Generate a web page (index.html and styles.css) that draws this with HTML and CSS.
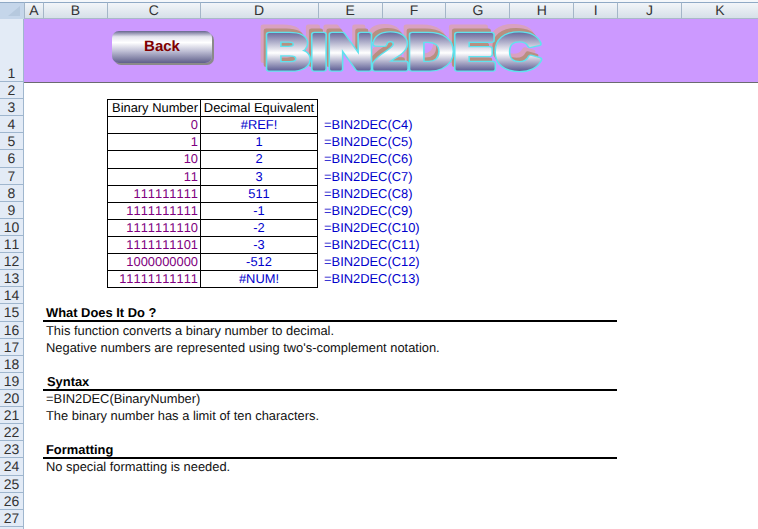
FILE: index.html
```html
<!DOCTYPE html>
<html lang="en">
<head>
    <meta charset="UTF-8">
    <title>BIN2DEC</title>
    <link rel="stylesheet" href="styles.css">
</head>
<body>
    <div class="colheads">
        <div class="corner"><svg width="24" height="16" viewBox="0 0 24 16"><polygon points="20,3 20,13 8,13" fill="#b6c9de"/></svg></div>
        <div class="col a">A</div>
        <div class="col b">B</div>
        <div class="col c">C</div>
        <div class="col d">D</div>
        <div class="col e">E</div>
        <div class="col e">F</div>
        <div class="col e">G</div>
        <div class="col e">H</div>
        <div class="col i">I</div>
        <div class="col e">J</div>
        <div class="col k">K</div>
    </div>

    <div class="row banner-row">
        <div class="num">1</div>
        <div class="banner">
            <a href="#" class="back">Back</a>
            <svg class="wordart" width="320" height="62" viewBox="0 0 320 62">
                <defs>
                    <linearGradient id="metal" gradientUnits="userSpaceOnUse" x1="0" y1="13" x2="0" y2="51">
                        <stop offset="0" stop-color="#66669a"/>
                        <stop offset="0.55" stop-color="#ffffff"/>
                        <stop offset="1" stop-color="#66669a"/>
                    </linearGradient>
                    <text id="word" transform="scale(1.255 1)" y="50">BIN2DEC</text>
                </defs>
                <use href="#word" class="pink" x="5" y="-8"/>
                <use href="#word" class="brown" x="8" y="-4"/>
                <use href="#word" class="outline" x="11"/>
                <use href="#word" class="metal" x="11"/>
            </svg>
        </div>
    </div>

    <div class="row"><div class="num">2</div></div>

    <div class="row"><div class="num">3</div><div class="cell-c head">Binary Number</div><div class="cell-d head">Decimal Equivalent</div></div>
    <div class="row"><div class="num">4</div><div class="cell-c">0</div><div class="cell-d">#REF!</div><div class="formula">=BIN2DEC(C4)</div></div>
    <div class="row"><div class="num">5</div><div class="cell-c">1</div><div class="cell-d">1</div><div class="formula">=BIN2DEC(C5)</div></div>
    <div class="row"><div class="num">6</div><div class="cell-c">10</div><div class="cell-d">2</div><div class="formula">=BIN2DEC(C6)</div></div>
    <div class="row"><div class="num">7</div><div class="cell-c">11</div><div class="cell-d">3</div><div class="formula">=BIN2DEC(C7)</div></div>
    <div class="row"><div class="num">8</div><div class="cell-c">111111111</div><div class="cell-d">511</div><div class="formula">=BIN2DEC(C8)</div></div>
    <div class="row"><div class="num">9</div><div class="cell-c">1111111111</div><div class="cell-d">-1</div><div class="formula">=BIN2DEC(C9)</div></div>
    <div class="row"><div class="num">10</div><div class="cell-c">1111111110</div><div class="cell-d">-2</div><div class="formula">=BIN2DEC(C10)</div></div>
    <div class="row"><div class="num">11</div><div class="cell-c">1111111101</div><div class="cell-d">-3</div><div class="formula">=BIN2DEC(C11)</div></div>
    <div class="row"><div class="num">12</div><div class="cell-c">1000000000</div><div class="cell-d">-512</div><div class="formula">=BIN2DEC(C12)</div></div>
    <div class="row last"><div class="num">13</div><div class="cell-c">11111111111</div><div class="cell-d">#NUM!</div><div class="formula">=BIN2DEC(C13)</div></div>

    <div class="row"><div class="num">14</div></div>
    <div class="row"><div class="num">15</div><div class="title">What Does It Do ?</div></div>
    <div class="row"><div class="num">16</div><div class="text">This function converts a binary number to decimal.</div></div>
    <div class="row"><div class="num">17</div><div class="text">Negative numbers are represented using two's-complement notation.</div></div>
    <div class="row"><div class="num">18</div></div>
    <div class="row"><div class="num">19</div><div class="title syntax">Syntax</div></div>
    <div class="row"><div class="num">20</div><div class="text">=BIN2DEC(BinaryNumber)</div></div>
    <div class="row"><div class="num">21</div><div class="text">The binary number has a limit of ten characters.</div></div>
    <div class="row"><div class="num">22</div></div>
    <div class="row"><div class="num">23</div><div class="title">Formatting</div></div>
    <div class="row"><div class="num">24</div><div class="text">No special formatting is needed.</div></div>
    <div class="row"><div class="num">25</div></div>
    <div class="row"><div class="num">26</div></div>
    <div class="row"><div class="num">27</div></div>
    <div class="row"><div class="num"></div></div>
</body>
</html>
```

FILE: styles.css
```css
html, body {
    height: 529px;
    overflow: hidden;
}
body {
    margin: 0;
    background-color: #fff;
    font-family: "Liberation Sans", Arial, sans-serif;
    font-size: 12.9px;
    text-rendering: geometricPrecision;
    font-kerning: none;
    color: #000;
}
.colheads {
    display: flex;
    height: 19px;
    padding-top: 2px;
    box-sizing: border-box;
    background-color: #f4f7fb;
}
.corner {
    width: 24px;
    height: 17px;
    background: #c5d6ea;
    border-top: 1px solid #8fa9c5;
    box-sizing: border-box;
}
.corner svg {
    display: block;
}
.col {
    height: 17px;
    box-sizing: border-box;
    border-top: 1px solid #8fa9c5;
    border-left: 1px solid #a4b6c8;
    border-bottom: 1px solid #a9b9c9;
    background: linear-gradient(#f2f5f9, #d6e0e8);
    color: #333;
    font-size: 14px;
    line-height: 15px;
    text-align: center;
}
.a { width: 19px; }
.b { width: 64px; }
.c { width: 93px; }
.d { width: 118px; }
.e { width: 64px; }
.i { width: 44px; }
.k { width: 77px; }
.row {
    display: flex;
    height: 17.12px;
    line-height: 17px;
}
.num {
    flex: none;
    width: 24px;
    box-sizing: border-box;
    background-color: #e3ebf6;
    border-bottom: 1px solid #9fb6ce;
    border-right: 1px solid #9fb6ce;
    color: #333;
    font-size: 14px;
    line-height: 16px;
    text-align: center;
}
.banner-row {
    height: 63px;
}
.banner-row .num {
    padding-top: 46px;
}
.banner {
    flex: 1;
    position: relative;
    background-color: #cc99ff;
    box-shadow: 0 1px 0 #6b6b70;
}
.back {
    position: absolute;
    left: 88px;
    top: 12px;
    width: 100px;
    height: 32px;
    border-radius: 7px;
    background: linear-gradient(#66668f 0%, #e4e4ee 18%, #ffffff 36%, #bcbcd3 64%, #5f5f8a 100%);
    box-shadow: 2px 2px 0 #8a8a8a;
    color: #800000;
    font-size: 15px;
    font-weight: bold;
    line-height: 32px;
    text-align: center;
    text-decoration: none;
}
.wordart {
    position: absolute;
    left: 230px;
    top: 0;
    font-size: 50px;
    font-weight: bold;
    stroke-linejoin: round;
}
.pink {
    fill: #d9a1bf;
    stroke: #d9a1bf;
    stroke-width: 4px;
}
.brown {
    fill: #b88f80;
    stroke: #b88f80;
    stroke-width: 4px;
}
.outline {
    stroke: #5fe3ee;
    stroke-width: 5.5px;
}
.metal {
    fill: url(#metal);
    stroke: url(#metal);
    stroke-width: 3px;
}
.cell-c, .cell-d {
    flex: none;
    box-sizing: border-box;
    border-top: 1px solid #000;
    border-left: 1px solid #000;
    line-height: 16px;
}
.cell-c {
    margin-left: 83px;
    width: 93px;
    padding-right: 2px;
    text-align: right;
    color: #800080;
}
.cell-d {
    width: 118px;
    border-right: 1px solid #000;
    text-align: center;
    color: #0000cc;
}
.head {
    color: #000;
}
.last .cell-c, .last .cell-d {
    height: 18px;
    border-bottom: 1px solid #000;
}
.formula {
    margin-left: 6px;
    color: #0000cc;
}
.title {
    width: 574px;
    height: 18px;
    margin-left: 19px;
    padding-left: 3px;
    box-sizing: border-box;
    border-bottom: 2px solid #000;
    font-weight: bold;
}
.syntax {
    padding-left: 4px;
}
.text {
    margin-left: 22px;
    color: #111;
}
```
